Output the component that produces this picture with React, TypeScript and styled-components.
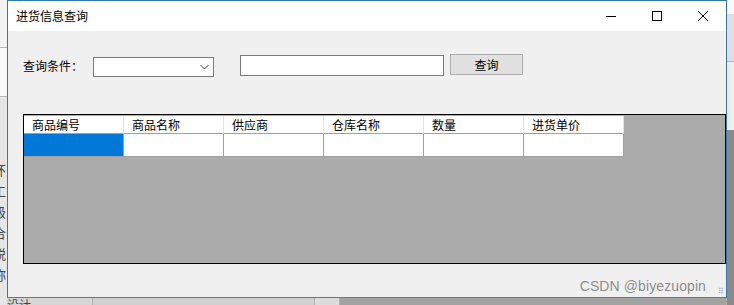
import React from "react";
import styled, { createGlobalStyle } from "styled-components";

const Global = createGlobalStyle`
  html, body { margin: 0; padding: 0; background: #a9a9a9; }
  body { width: 734px; height: 305px; overflow: hidden; font-family: "Noto Sans CJK SC", "Noto Sans", sans-serif; }
  * { box-sizing: border-box; }
`;

const Screen = styled.div`
  position: relative;
  width: 734px;
  height: 305px;
  display: grid;
  grid-template-columns: 7px 720px 7px;
  overflow: hidden;
  background: #a6a6a6;
`;

const LeftStrip = styled.div`
  display: flex;
  flex-direction: column;
  overflow: hidden;
  background: #e6e6e6;
`;

const StripBlock = styled.div<{ $h: number; $bg: string; $line?: boolean }>`
  height: ${(p) => p.$h}px;
  flex: none;
  background: ${(p) => p.$bg};
  border-bottom: ${(p) => (p.$line ? "1px solid #b9b9b9" : "none")};
`;

const FragList = styled.div`
  display: flex;
  flex-direction: column;
  padding-top: 66px;
  gap: 8px;
`;

const Frag = styled.div`
  font-size: 13px;
  line-height: 13px;
  height: 13px;
  color: #444;
  margin-left: -7px;
  white-space: nowrap;
`;

const MiddleCol = styled.div`
  display: flex;
  flex-direction: column;
`;

const Window = styled.div`
  height: 298px;
  flex: none;
  border: 1px solid #2a7ab8;
  border-bottom-color: #3683bd;
  display: flex;
  flex-direction: column;
  background: #f0f0f0;
`;

const TitleBar = styled.div`
  height: 30px;
  flex: none;
  background: #ffffff;
  display: flex;
  align-items: center;
  padding-left: 8px;
`;

const Title = styled.div`
  flex: 1;
  font-size: 12px;
  color: #000;
  padding-bottom: 1px;
`;

const CtrlBtn = styled.div`
  width: 46px;
  height: 30px;
  display: flex;
  align-items: center;
  justify-content: center;
`;

const Body = styled.div`
  flex: 1;
  display: flex;
  flex-direction: column;
  padding: 22px 0 0 15px;
  position: relative;
`;

const QueryRow = styled.div`
  display: flex;
  align-items: center;
  height: 23px;
`;

const Label = styled.div`
  font-size: 12px;
  width: 70px;
  color: #000;
  margin-top: 1px;
`;

const Combo = styled.div`
  width: 121px;
  height: 20px;
  margin-top: 4px;
  background: #fff;
  border: 1px solid #7a7a7a;
  display: flex;
  align-items: center;
  justify-content: flex-end;
  padding-right: 4px;
`;

const TextInput = styled.div`
  width: 204px;
  height: 21px;
  margin-left: 26px;
  margin-top: 1px;
  background: #fff;
  border: 1px solid #7a7a7a;
`;

const Button = styled.div`
  width: 73px;
  height: 21px;
  margin-left: 6px;
  margin-top: -1px;
  background: #e1e1e1;
  border: 1px solid #adadad;
  display: flex;
  align-items: center;
  justify-content: center;
  font-size: 12px;
  color: #000;
`;

const Grid = styled.div`
  margin-top: 38px;
  width: 703px;
  height: 150px;
  background: #ababab;
  border: 1px solid #000;
  padding: 1px 0 0 0;
  display: flex;
  flex-direction: column;
`;

const Row = styled.div`
  display: flex;
`;

const HeadCell = styled.div`
  width: 100px;
  height: 18px;
  background: #fff;
  border-right: 1px solid #e3e3e3;
  border-bottom: 1px solid #a0a0a0;
  font-size: 12px;
  line-height: 17px;
  padding-left: 8px;
  color: #000;
  overflow: hidden;
  white-space: nowrap;
`;

const DataCell = styled.div<{ $sel?: boolean }>`
  width: 100px;
  height: 23px;
  background: ${(p) => (p.$sel ? "#0078d7" : "#fff")};
  border-right: 1px solid #a0a0a0;
  border-bottom: 1px solid #a0a0a0;
`;

const Watermark = styled.div`
  position: absolute;
  right: 20px;
  bottom: 3px;
  font-family: "Liberation Sans", Arial, sans-serif;
  font-size: 14px;
  color: #8a8a8a;
  text-shadow: 0 0 1px #fff;
  letter-spacing: 0.1px;
`;

const Grip = styled.div`
  position: absolute;
  right: 2px;
  bottom: 2px;
  font-size: 8px;
  color: #aaa;
  line-height: 8px;
`;

const BottomStrip = styled.div`
  flex: 1;
  display: grid;
  grid-template-columns: 86px 222px 25px 1fr;
  background: #a3a3a3;
`;

const BottomPart = styled.div<{ $bg: string }>`
  background: ${(p) => p.$bg};
  border-right: 1px solid #b0b0b0;
  font-size: 12px;
  line-height: 14px;
  color: #444;
  overflow: hidden;
  white-space: nowrap;
`;

const RightStrip = styled.div`
  display: flex;
  flex-direction: column;
  background: #8a8a8a;
`;

const headers = ["商品编号", "商品名称", "供应商", "仓库名称", "数量", "进货单价"];

export default function App() {
  return (
    <>
      <Global />
      <Screen>
        <LeftStrip>
          <StripBlock $h={48} $bg="#f3f3f3" $line />
          <StripBlock $h={49} $bg="#f9f9f9" $line />
          <FragList>
            {["环", "工", "级", "合", "税", "称"].map((c) => (
              <Frag key={c}>{c}</Frag>
            ))}
          </FragList>
        </LeftStrip>
        <MiddleCol>
          <Window>
            <TitleBar>
              <Title>进货信息查询</Title>
              <CtrlBtn>
                <svg width="10" height="10" viewBox="0 0 10 10">
                  <path d="M0 5.5h10" stroke="#000" strokeWidth="1" />
                </svg>
              </CtrlBtn>
              <CtrlBtn>
                <svg width="10" height="10" viewBox="0 0 10 10">
                  <rect x="0.5" y="0.5" width="9" height="9" fill="none" stroke="#000" strokeWidth="1" />
                </svg>
              </CtrlBtn>
              <CtrlBtn>
                <svg width="10" height="10" viewBox="0 0 10 10">
                  <path d="M0 0L10 10M10 0L0 10" stroke="#000" strokeWidth="1" />
                </svg>
              </CtrlBtn>
            </TitleBar>
            <Body>
              <QueryRow>
                <Label>查询条件：</Label>
                <Combo>
                  <svg width="9" height="6" viewBox="0 0 9 6">
                    <path d="M0.5 1L4.5 5L8.5 1" fill="none" stroke="#444" strokeWidth="1" />
                  </svg>
                </Combo>
                <TextInput />
                <Button>查询</Button>
              </QueryRow>
              <Grid>
                <Row>
                  {headers.map((h) => (
                    <HeadCell key={h}>{h}</HeadCell>
                  ))}
                </Row>
                <Row>
                  {headers.map((h, i) => (
                    <DataCell key={h} $sel={i === 0} />
                  ))}
                </Row>
              </Grid>
              <Watermark>CSDN @biyezuopin</Watermark>
              <Grip>⠿</Grip>
            </Body>
          </Window>
          <BottomStrip>
            <BottomPart $bg="#d6d6d6">设计</BottomPart>
            <BottomPart $bg="#d0d0d0" />
            <BottomPart $bg="#dcdcdc" />
            <BottomPart $bg="#a3a3a3" />
          </BottomStrip>
        </MiddleCol>
        <RightStrip>
          <StripBlock $h={14} $bg="#fafafa" />
          <StripBlock $h={48} $bg="#e0e0e0" $line />
          <StripBlock $h={68} $bg="#eeeeee" />
        </RightStrip>
      </Screen>
    </>
  );
}
